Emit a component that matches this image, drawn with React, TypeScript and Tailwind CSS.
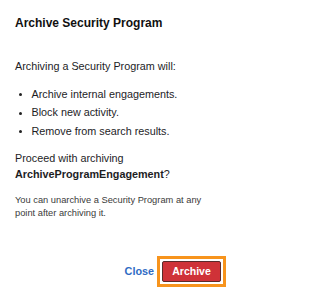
export default function App() {
  return (
    <div
      className="w-[237px] h-[299px] bg-white px-[15px] pt-[15px] text-[#1d1d1f] flex flex-col"
      style={{ fontFamily: '"Liberation Sans", Arial, sans-serif' }}
    >
      <h1 className="text-[12px] leading-[17px] font-bold text-[#111]">Archive Security Program</h1>
      <p className="mt-[26.6px] text-[10.8px] leading-[15.4px]">Archiving a Security Program will:</p>
      <ul className="mt-[12.9px] flex flex-col gap-[3px] text-[10.8px] leading-[15.4px]">
        {["Archive internal engagements.", "Block new activity.", "Remove from search results."].map((t) => (
          <li key={t} className="flex items-center">
            <span className="ml-[4px] w-[3px] h-[3px] rounded-full bg-[#222] shrink-0" />
            <span className="ml-[9.5px]">{t}</span>
          </li>
        ))}
      </ul>
      <p className="mt-[12px] text-[10.8px] leading-[15.4px]">
        Proceed with archiving
        <br />
        <span className="font-bold">ArchiveProgramEngagement</span>?
      </p>
      <p className="mt-[11.9px] text-[9.3px] leading-[13.4px] text-[#3a3a3a]">
        You can unarchive a Security Program at any point after archiving it.
      </p>
      <div className="mt-[35.6px] flex items-center justify-end mr-[-4px] gap-[3px]">
        <button className="text-[10.8px] font-bold text-[#2f6bc4] leading-[21px]">Close</button>
        <span className="flex border-[3px] border-[#f7941d] p-[2px] bg-white">
          <button className="w-[59px] h-[21px] rounded-[2px] bg-[#cf3238] border border-[#5a2a2a] text-white text-[10.5px] font-bold leading-none">
            Archive
          </button>
        </span>
      </div>
    </div>
  );
}
